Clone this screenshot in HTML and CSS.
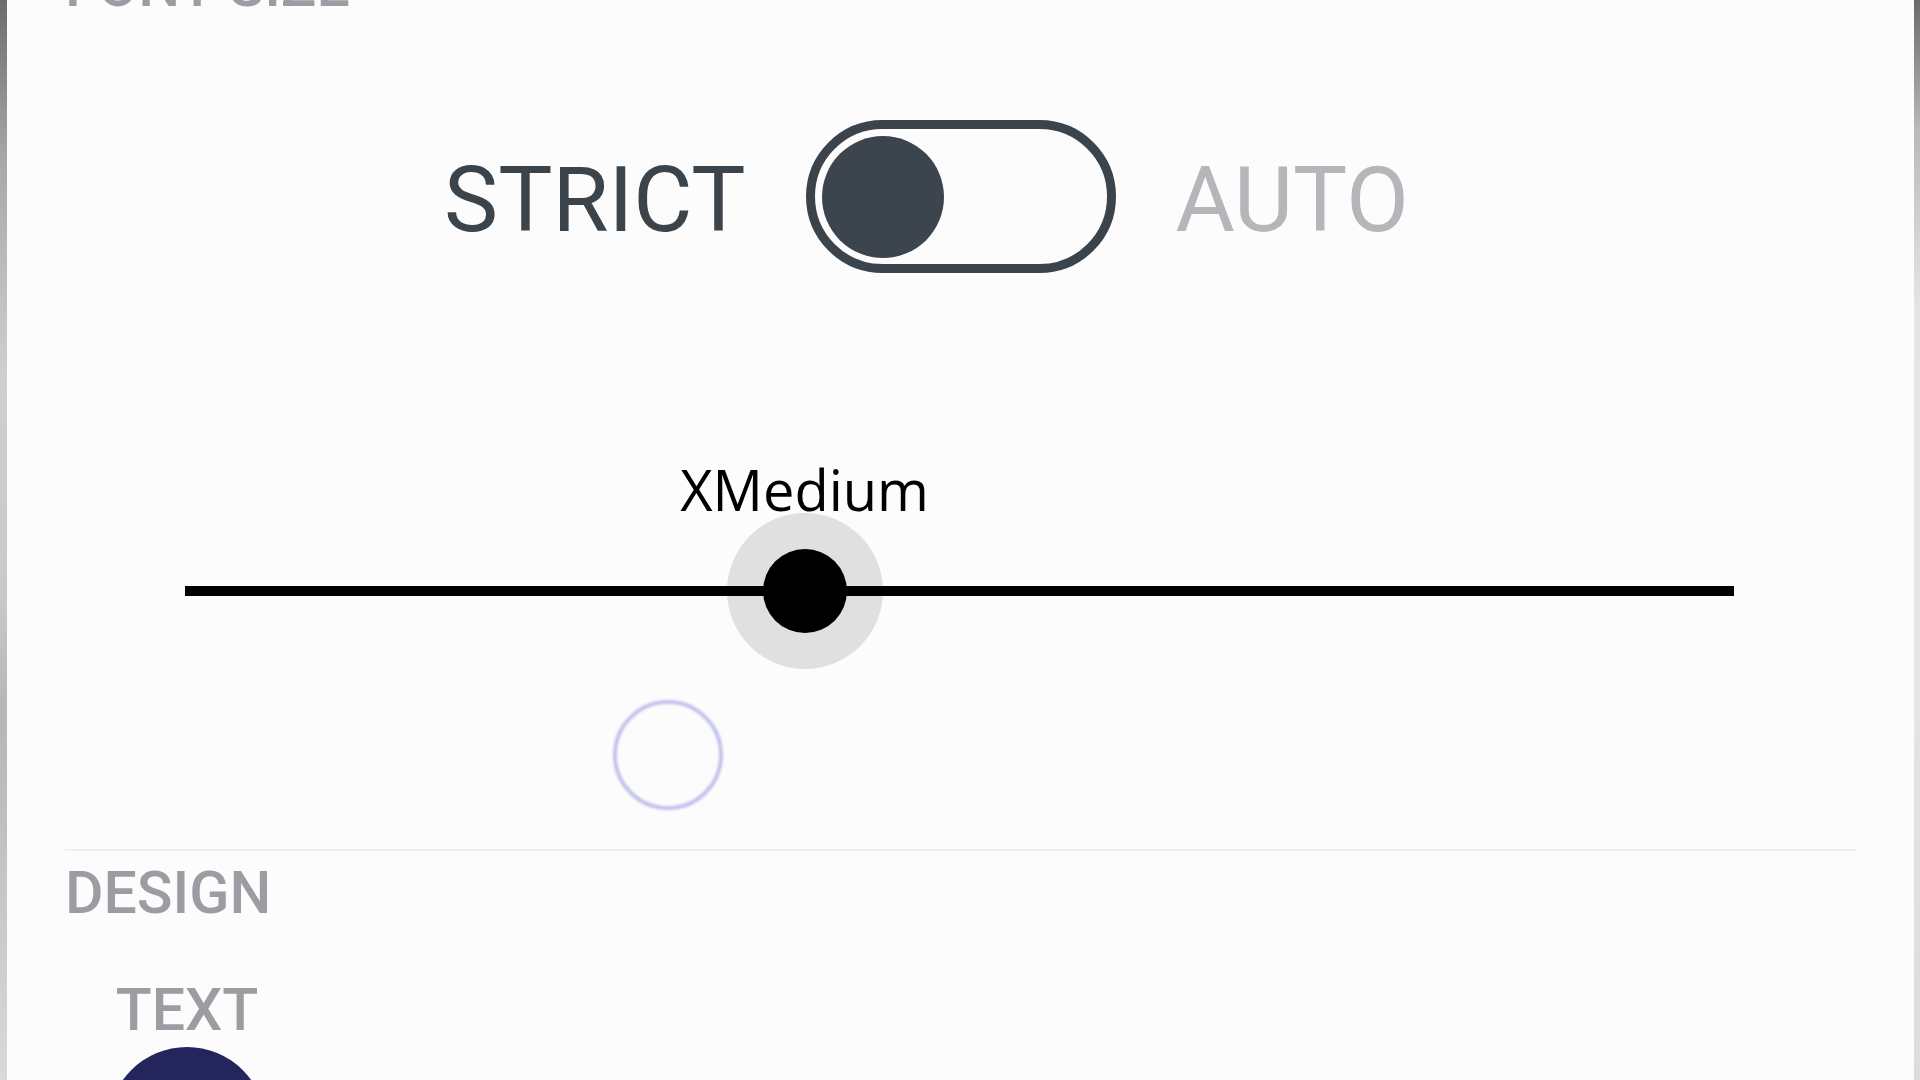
FILE: index.html
```html
<!DOCTYPE html>
<html lang="en">
<head>
  <meta charset="UTF-8" />
  <meta name="viewport" content="width=device-width, initial-scale=1.0"/>
  <title>Settings</title>
  <link rel="stylesheet" href="styles.css">
</head>
<body>
  <div class="frame">
    <div class="edge edge-left"></div>

    <main class="panel">
      <h2 class="section-title font-title">FONT SIZE</h2>

      <div class="mode-row">
        <span class="mode-label active">STRICT</span>
        <div class="switch">
          <div class="switch-knob"></div>
        </div>
        <span class="mode-label">AUTO</span>
      </div>

      <div class="slider">
        <div class="slider-value" style="left: 40%;">XMedium</div>
        <div class="slider-halo" style="left: 40%;"></div>
        <div class="slider-track"></div>
        <div class="slider-thumb" style="left: 40%;"></div>
      </div>

      <!-- touch indicator left on screen -->
      <div class="touch-ring"></div>

      <hr class="divider">

      <h2 class="section-title">DESIGN</h2>

      <div class="swatches">
        <div class="swatch">
          <span class="swatch-label">TEXT</span>
          <div class="swatch-dot"></div>
        </div>
      </div>
    </main>

    <div class="edge edge-right"></div>
  </div>
</body>
</html>
```

FILE: styles.css
```css
html, body {
  margin: 0;
  height: 100%;
  overflow: hidden;
}

body {
  background-color: #fcfcfc;
  font-family: Roboto, 'Noto Sans', sans-serif;
}

.frame {
  display: flex;
  height: 1080px;
}

.edge {
  flex: none;
}

.edge-left {
  width: 7px;
  background: linear-gradient(to bottom, #6c6c6c 0%, #a8a8a8 15%, #cfcfcf 35%, #c9c9c9 55%, #b6b6b6 66%, #c4c4c4 80%, #d9d9d9 100%);
}

.edge-right {
  width: 6px;
  background: linear-gradient(to bottom, #6a6a6a 0%, #b9b9b9 12%, #e4e4e4 28%, #e6e6e6 60%, #dcdcdc 100%);
}

.panel {
  flex: 1;
  position: relative;
  padding: 0 58px;
  overflow: hidden;
}

.section-title {
  margin: 0;
  font-size: 59px;
  line-height: 60px;
  font-weight: 500;
  color: #9b9da2;
}

.font-title {
  margin-top: -44px;
}

/* strict / auto switch */
.mode-row {
  display: grid;
  grid-template-columns: 1fr auto 1fr;
  align-items: center;
  column-gap: 60px;
  margin-top: 104px;
}

.mode-label {
  font-size: 91px;
  line-height: 91px;
  color: #b4b6ba;
  margin-top: 7px;
}

.mode-label.active {
  justify-self: end;
  color: #3b434b;
}

.switch {
  width: 310px;
  height: 153px;
  box-sizing: border-box;
  border: 9px solid #3b434b;
  border-radius: 77px;
  padding: 7px;
  display: flex;
  align-items: center;
}

.switch-knob {
  width: 122px;
  height: 122px;
  border-radius: 50%;
  background-color: #3c444d;
}

/* font size slider */
.slider {
  position: relative;
  height: 260px;
  margin: 167px 122px 0 120px;
}

.slider-track {
  position: absolute;
  left: 0;
  right: 0;
  top: 146px;
  height: 10px;
  background-color: #000;
}

.slider-value {
  position: absolute;
  top: 21px;
  transform: translateX(-50%);
  font-family: 'Open Sans', 'Noto Sans', sans-serif;
  font-size: 56px;
  line-height: 57px;
  color: #000;
  white-space: nowrap;
}

.slider-halo {
  position: absolute;
  top: 73px;
  width: 156px;
  height: 156px;
  margin-left: -78px;
  border-radius: 50%;
  background-color: #e0e0e0;
}

.slider-thumb {
  position: absolute;
  top: 109px;
  width: 84px;
  height: 84px;
  margin-left: -42px;
  border-radius: 50%;
  background-color: #000;
}

.touch-ring {
  position: absolute;
  left: 606px;
  top: 700px;
  width: 110px;
  height: 110px;
  box-sizing: border-box;
  border-radius: 50%;
  border: 4px solid rgba(150, 150, 225, 0.55);
  filter: blur(1.2px);
}

.divider {
  border: none;
  height: 2px;
  background-color: #efefef;
  margin: 149px 0 12px 0;
}

.swatches {
  display: flex;
  margin-top: 57px;
  padding-left: 43px;
}

.swatch {
  display: flex;
  flex-direction: column;
  align-items: center;
  gap: 7px;
}

.swatch-label {
  font-size: 59px;
  line-height: 60px;
  font-weight: 500;
  color: #9b9da2;
}

.swatch-dot {
  flex: none;
  width: 158px;
  height: 158px;
  border-radius: 50%;
  background-color: #25255e;
}
```
